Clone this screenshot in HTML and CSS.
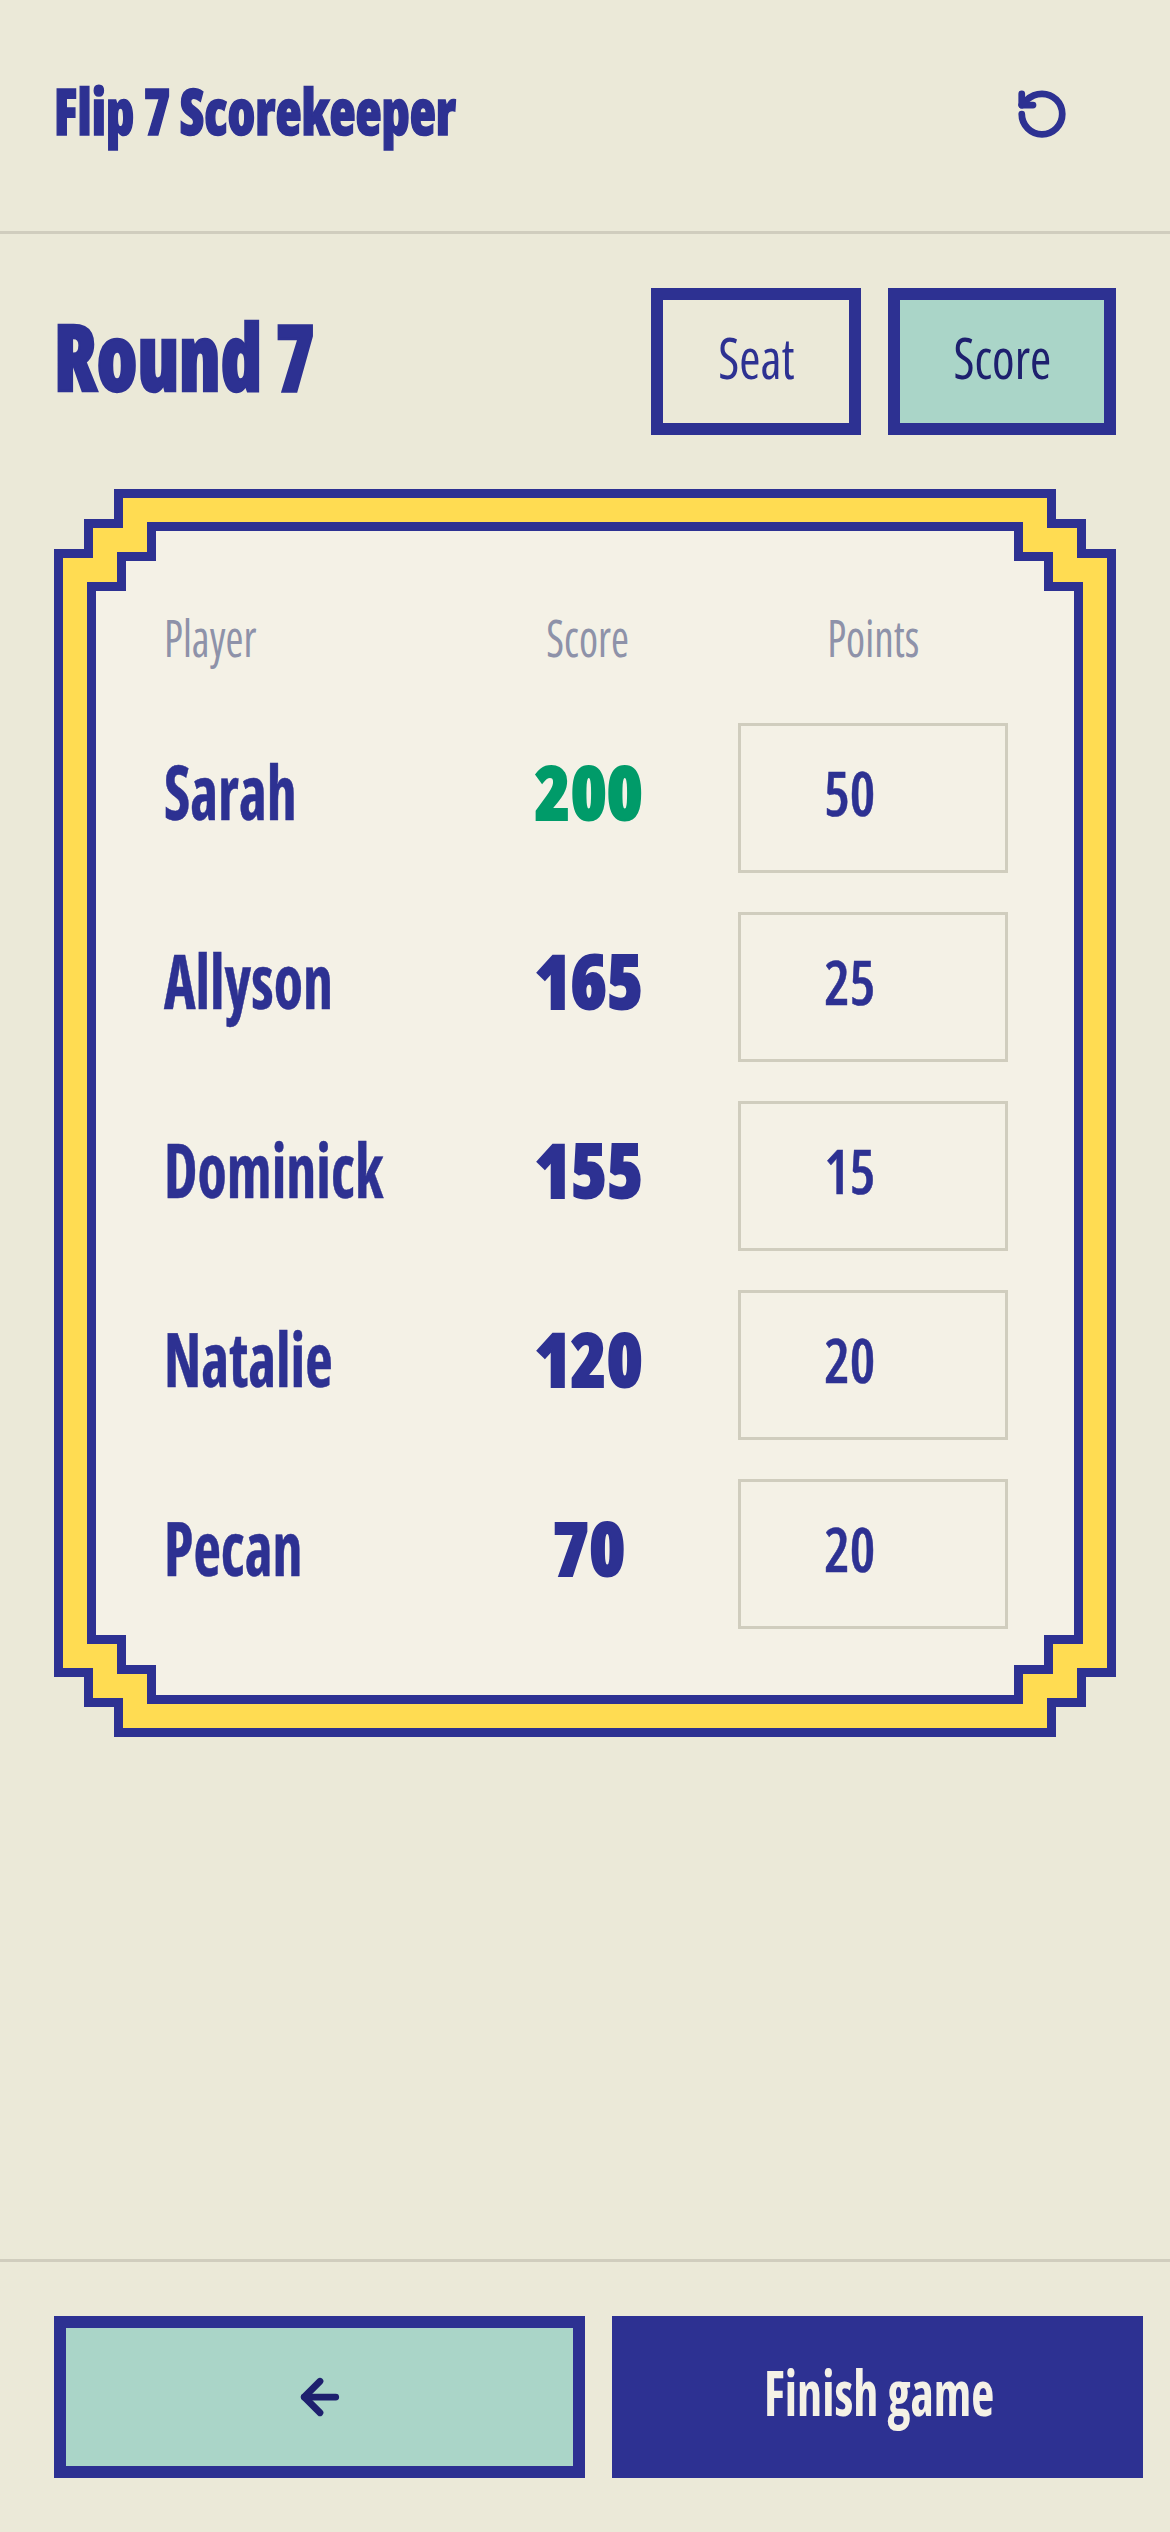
FILE: index.html
```
<!DOCTYPE html>
<html lang="en">
<head>
<meta charset="utf-8">
<title>Flip 7 Scorekeeper</title>
<link rel="stylesheet" href="styles.css">
</head>
<body>
<div class="app">
  <header class="topbar">
    <h1 class="brand"><span>Flip 7 Scorekeeper</span></h1>
    <button class="icon-btn" aria-label="Restart">
      <svg class="icon" viewBox="0 0 24 24"><path d="M3 12a9 9 0 1 0 9-9 9.75 9.75 0 0 0-6.74 2.74L3 8"/><path d="M3 3v5h5"/></svg>
    </button>
  </header>
  <main class="main">
    <div class="round-row">
      <h2 class="round"><span>Round 7</span></h2>
      <div class="tabs">
        <button class="tab tab-seat"><span>Seat</span></button>
        <button class="tab tab-score"><span>Score</span></button>
      </div>
    </div>
    <section class="frame frame-blue">
      <div class="frame frame-yellow">
        <div class="frame frame-blue">
          <div class="frame frame-cream">
            <div class="table">
              <div class="th th-player"><span>Player</span></div>
              <div class="th"><span>Score</span></div>
              <div class="th"><span>Points</span></div>

              <div class="name"><span>Sarah</span></div>
              <div class="total total-lead"><span>200</span></div>
              <div class="points"><span>50</span></div>

              <div class="name"><span>Allyson</span></div>
              <div class="total"><span>165</span></div>
              <div class="points"><span>25</span></div>

              <div class="name"><span>Dominick</span></div>
              <div class="total"><span>155</span></div>
              <div class="points"><span>15</span></div>

              <div class="name"><span>Natalie</span></div>
              <div class="total"><span>120</span></div>
              <div class="points"><span>20</span></div>

              <div class="name"><span>Pecan</span></div>
              <div class="total"><span>70</span></div>
              <div class="points"><span>20</span></div>
            </div>
          </div>
        </div>
      </div>
    </section>
  </main>
  <footer class="footer">
    <button class="foot-btn foot-back" aria-label="Back">
      <svg class="icon icon-dark" viewBox="0 0 24 24"><path d="m12 19-7-7 7-7"/><path d="M19 12H5"/></svg>
    </button>
    <button class="foot-btn foot-finish"><span>Finish game</span></button>
  </footer>
</div>
</body>
</html>
```
FILE: styles.css
```
* { box-sizing: border-box; margin: 0; padding: 0; }
html, body { width: 1170px; height: 2532px; overflow: hidden; }
body {
  background: #ebe9d8;
  color: #2d3192;
  font-family: "Open Sans", "Roboto", sans-serif;
  font-stretch: 75%;
}
button { font: inherit; color: inherit; background: none; border: 0; }
span { display: inline-block; white-space: nowrap; }

.app { height: 2532px; display: flex; flex-direction: column; }

.topbar {
  height: 234px;
  padding: 0 102px 4px 54px;
  border-bottom: 3px solid #d0cdbe;
  display: flex;
  align-items: center;
  justify-content: space-between;
}
.brand { font-size: 63px; font-weight: 800; line-height: 80px; padding-bottom: 6px; }
.brand span { transform: scaleX(.855); transform-origin: left center; -webkit-text-stroke: 1.5px #2d3192; }
.icon-btn { width: 54px; height: 54px; display: flex; transform: translateX(1px); }
.icon {
  width: 54px; height: 54px;
  fill: none; stroke: #2d3192; stroke-width: 3;
  stroke-linecap: round; stroke-linejoin: round;
}
.icon-dark { stroke: #1e206e; }

.main { flex: 1; padding: 54px 54px 0; display: flex; flex-direction: column; gap: 54px; }
.round-row { display: flex; align-items: center; justify-content: space-between; height: 147px; }
.round { font-size: 92px; font-weight: 800; line-height: 110px; padding-bottom: 12px; }
.round span { transform: scaleX(.855); transform-origin: left center; -webkit-text-stroke: 2.5px #2d3192; }
.tabs { display: flex; gap: 27px; }
.tab {
  height: 147px;
  border: 12px solid #2d3192;
  font-size: 57px;
  font-weight: 500;
  padding-bottom: 10px;
  display: flex; align-items: center; justify-content: center;
}
.tab span { transform: scaleX(.9); }
.tab-seat { width: 210px; }
.tab-score { width: 228px; background: #aad5c8; color: #1e206e; }

.frame {
  clip-path: polygon(
    60px 0, calc(100% - 60px) 0, calc(100% - 60px) 30px, calc(100% - 30px) 30px,
    calc(100% - 30px) 60px, 100% 60px, 100% calc(100% - 60px), calc(100% - 30px) calc(100% - 60px),
    calc(100% - 30px) calc(100% - 30px), calc(100% - 60px) calc(100% - 30px), calc(100% - 60px) 100%, 60px 100%,
    60px calc(100% - 30px), 30px calc(100% - 30px), 30px calc(100% - 60px), 0 calc(100% - 60px),
    0 60px, 30px 60px, 30px 30px, 60px 30px);
}
.frame-blue { background: #2d3192; padding: 9px; }
.frame-yellow { background: #ffdc52; padding: 24px; }
.frame-cream { background: #f4f1e6; padding: 60px 66px 66px 68px; }

.table {
  display: grid;
  grid-template-columns: 274px 300px 270px;
  grid-auto-rows: 150px;
  grid-template-rows: 93px;
  row-gap: 39px;
  align-items: center;
}
.th { color: #8e92a9; font-size: 51px; font-weight: 500; text-align: center; padding-bottom: 2px; }
.th span { transform: scaleX(.85); }
.th-player { text-align: left; }
.th-player span { transform-origin: left center; }
.name { font-size: 75px; font-weight: 700; line-height: 100px; padding-bottom: 15px; }
.name span { transform: scaleX(.8); transform-origin: left center; -webkit-text-stroke: .5px #2d3192; }
.total { font-size: 75px; font-weight: 800; line-height: 100px; text-align: center; padding: 0 0 15px 2px; }
.total span { transform: scaleX(.97); -webkit-text-stroke: 2px currentColor; }
.total-lead { color: #009b69; }
.points {
  height: 150px;
  border: 3px solid #d0cdbe;
  font-size: 62px;
  font-weight: 600;
  padding: 0 46px 12px 0;
  display: flex; align-items: center; justify-content: center;
}
.points span { transform: scaleX(.92); -webkit-text-stroke: .5px #2d3192; }

.footer {
  height: 273px;
  padding: 54px 27px 54px 54px;
  border-top: 3px solid #d0cdbe;
  display: flex;
  gap: 27px;
}
.foot-btn { width: 531px; height: 162px; display: flex; align-items: center; justify-content: center; }
.foot-back { background: #aad5c8; border: 12px solid #2d3192; }
.foot-finish { background: #2d3192; color: #f4f1e6; font-size: 62px; font-weight: 700; padding: 0 0 11px 3px; }
.foot-finish span { transform: scaleX(.81); }
```
